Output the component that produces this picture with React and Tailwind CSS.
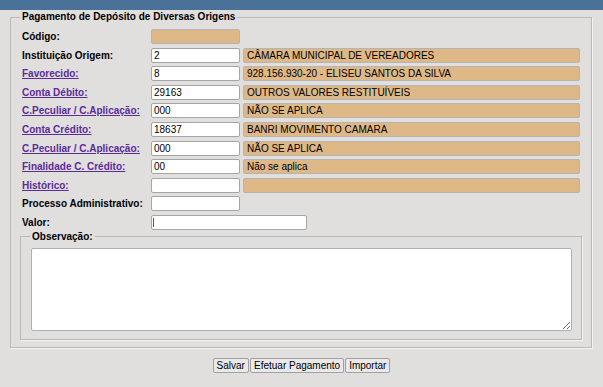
// App.jsx
import { useState } from "react";

const rows = [
  { label: "Instituição Origem:", link: false, code: "2", desc: "CÂMARA MUNICIPAL DE VEREADORES" },
  { label: "Favorecido:", link: true, code: "8", desc: "928.156.930-20 - ELISEU SANTOS DA SILVA" },
  { label: "Conta Débito:", link: true, code: "29163", desc: "OUTROS VALORES RESTITUÍVEIS" },
  { label: "C.Peculiar / C.Aplicação:", link: true, code: "000", desc: "NÃO SE APLICA" },
  { label: "Conta Crédito:", link: true, code: "18637", desc: "BANRI MOVIMENTO CAMARA" },
  { label: "C.Peculiar / C.Aplicação:", link: true, code: "000", desc: "NÃO SE APLICA" },
  { label: "Finalidade C. Crédito:", link: true, code: "00", desc: "Não se aplica" },
  { label: "Histórico:", link: true, code: "", desc: "" },
];

function Label({ text, link }) {
  if (link) {
    return (
      <a href="#" className="font-bold text-[#5b2c98] underline leading-[15px] whitespace-nowrap">
        {text}
      </a>
    );
  }
  return <span className="font-bold leading-[15px] whitespace-nowrap">{text}</span>;
}

function App() {
  const [valor, setValor] = useState("");
  const [obs, setObs] = useState("");

  return (
    <div className="min-h-screen bg-[#e0dfdd] font-['Liberation_Sans',Arial,sans-serif] text-[10px] text-black">
      {/* Top bar */}
      <div className="h-[10px] bg-[#4a7298]" />

      <fieldset className="ml-[10px] mr-[11px] mt-[1px] border border-[#b9b9b9] shadow-[1px_1px_0_#f3f3f3] pl-[11px] pr-[11px] pb-[7px]">
        <legend className="-ml-[2px] px-[2px] font-bold leading-[12px]">
          Pagamento de Depósito de Diversas Origens
        </legend>

        <div className="mt-[6px] grid grid-cols-[126px_89px_1fr] gap-x-[3px] gap-y-[3.6px]">
          <Label text="Código:" link={false} />
          <div className="h-[15px] rounded-[2px] border border-[#b4b4b4] bg-[#deb887]" />
          <div />

          {rows.map((r, i) => (
            <div key={i} className="contents">
              <Label text={r.label} link={r.link} />
              <input
                readOnly
                value={r.code}
                className="h-[15px] w-full rounded-[2px] border border-[#a5a5a5] bg-white px-[2px] text-[10px] leading-[13px] outline-none"
              />
              <div className="h-[15px] rounded-[2px] border border-[#b4b4b4] bg-[#deb887] px-[3px] leading-[13px] whitespace-nowrap overflow-hidden">
                {r.desc}
              </div>
            </div>
          ))}

          <Label text="Processo Administrativo:" link={false} />
          <input
            readOnly
            className="h-[15px] w-full rounded-[2px] border border-[#a5a5a5] bg-white px-[2px] text-[10px] outline-none"
          />
          <div />

          <Label text="Valor:" link={false} />
          <div className="col-span-2 relative">
            <input
              value={valor}
              onChange={(e) => setValor(e.target.value)}
              className="h-[15px] w-[156px] rounded-[2px] border border-[#a5a5a5] bg-white px-[2px] text-[10px] outline-none"
            />
            {/* caret */}
            <span className="absolute left-[2px] top-[3px] h-[9px] w-[1px] bg-[#555]" />
          </div>
        </div>

        {/* Observação */}
        <fieldset className="-mx-[2px] mt-[1px] border border-[#b9b9b9] shadow-[1px_1px_0_#f3f3f3] pl-[10px] pr-[9px] pb-[8px]">
          <legend className="-ml-[1px] px-[2px] font-bold leading-[12px]">Observação:</legend>
          <textarea
            value={obs}
            onChange={(e) => setObs(e.target.value)}
            className="mt-[5px] block h-[83px] w-full rounded-[2px] border border-[#b0b0b0] bg-white p-[2px] text-[10px] outline-none"
          />
        </fieldset>
      </fieldset>

      {/* Buttons */}
      <div className="mt-[10px] flex justify-center gap-[1px]">
        <button className="h-[15px] rounded-[2px] border border-[#a0a0a0] bg-[#e9e9e9] px-[3px] text-[10px] leading-[13px]">
          Salvar
        </button>
        <button className="h-[15px] rounded-[2px] border border-[#a0a0a0] bg-[#e9e9e9] px-[3px] text-[10px] leading-[13px]">
          Efetuar Pagamento
        </button>
        <button className="h-[15px] rounded-[2px] border border-[#a0a0a0] bg-[#e9e9e9] px-[3px] text-[10px] leading-[13px]">
          Importar
        </button>
      </div>
    </div>
  );
}

export default App;
